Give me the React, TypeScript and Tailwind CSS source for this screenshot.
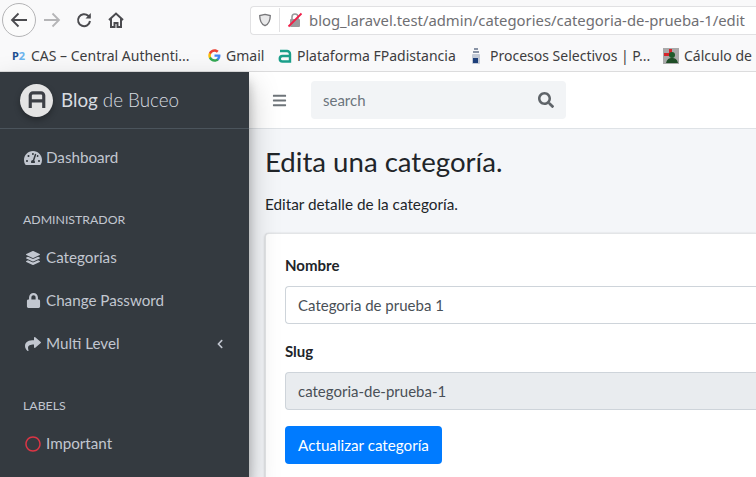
import { FaBars, FaChevronLeft, FaLayerGroup, FaLock, FaRegCircle, FaSearch, FaShare, FaTachometerAlt } from 'react-icons/fa';

const bookmarks = [
  { label: 'CAS – Central Authenti...', icon: <span className="w-[14px] text-[11px] font-bold leading-none"><span className="text-[#1d4f91]">P</span><span className="text-[#6cb4ee]">2</span></span>, width: 'w-[196px]' },
  {
    label: 'Gmail',
    width: 'w-[70px]',
    icon: (
      <svg viewBox="0 0 24 24" className="w-[13px] h-[13px]">
        <path fill="#4285F4" d="M23 12.300c0-.8-.1-1.600-.2-2.300H12v4.400h6.200c-.3 1.400-1.100 2.600-2.300 3.400v2.800h3.700c2.100-2 3.400-4.900 3.400-8.300z" />
        <path fill="#34A853" d="M12 23.500c3.100 0 5.700-1 7.600-2.800l-3.700-2.900c-1 .7-2.400 1.100-3.900 1.100-3 0-5.500-2-6.400-4.700H1.800v2.900c1.900 3.800 5.800 6.400 10.200 6.400z" />
        <path fill="#FBBC05" d="M5.600 14.200c-.5-1.400-.5-3 0-4.400V6.900H1.800c-1.600 3.200-1.600 7 0 10.200l3.800-2.900z" />
        <path fill="#EA4335" d="M12 5c1.700 0 3.200.6 4.400 1.700l3.300-3.300C17.700 1.600 15.100.5 12 .5 7.600.5 3.700 3.100 1.800 6.900l3.800 2.900C6.500 7 9 5 12 5z" />
      </svg>
    ),
  },
  {
    label: 'Plataforma FPadistancia',
    width: 'w-[192px]',
    icon: (
      <svg viewBox="0 0 14 14" className="w-[14px] h-[14px]" fill="none" stroke="#1a9f8a" strokeWidth="2.400">
        <path d="M2 2h7a3 3 0 0 1 3 3v7.500H4.500a2.500 2.500 0 0 1 0-5.500H12" />
      </svg>
    ),
  },
  {
    label: 'Procesos Selectivos | P...',
    width: 'w-[193px]',
    icon: (
      <svg viewBox="0 0 12 16" className="mr-[3px] w-[12px] h-[16px]">
        <rect x="4" y="0" width="4" height="2" fill="#8a94a6" />
        <rect x="3" y="3" width="6" height="2" fill="#8a94a6" />
        <rect x="2" y="6" width="8" height="10" rx="1" fill="#c3cad6" />
        <rect x="3" y="10" width="5" height="5" fill="#1d3f7a" />
      </svg>
    ),
  },
  {
    label: 'Cálculo de p',
    width: 'w-auto',
    icon: (
      <svg viewBox="0 0 16 16" className="w-[16px] h-[16px]">
        <rect width="16" height="16" fill="#a9a9a9" />
        <path d="M1 5h5V1h3v4h-2v3H1z" fill="#d8232a" />
        <circle cx="9" cy="7" r="3" fill="#1f5a2a" />
        <path d="M3 15c1-4 3-5 6-5s5 1 6 5z" fill="#1f4d26" />
      </svg>
    ),
  },
];

const navIconClass = 'w-[18px] flex justify-center text-[#c2c7d0] shrink-0';

function NavItem({ icon, label, trailing }: { icon: React.ReactNode; label: string; trailing?: boolean }) {
  return (
    <div className="h-[43px] flex items-center pl-[24px] pr-[24px] text-[#c2c7d0] text-[15.200px]">
      <span className={navIconClass}>{icon}</span>
      <span className="ml-[4px] flex-1">{label}</span>
      {trailing && <FaChevronLeft className="text-[10px]" />}
    </div>
  );
}

export default function App() {
  return (
    <div className="w-[756px] h-[477px] overflow-hidden bg-[#f9f9fa] flex flex-col font-['Noto_Sans',sans-serif]">
      {/* Browser toolbar */}
      <div className="h-[40px] flex items-center shrink-0 relative">
        <div className="ml-[2px] w-[34px] h-[34px] rounded-full border border-[#b4b4b6] bg-[#fbfbfb] flex items-center justify-center">
          <svg viewBox="0 0 18 18" className="w-[18px] h-[18px]" fill="none" stroke="#4b4b4f" strokeWidth="1.800">
            <path d="M17 9H2M8.500 2.500 2 9l6.500 6.500" />
          </svg>
        </div>
        <svg viewBox="0 0 18 18" className="ml-[7px] w-[18px] h-[18px]" fill="none" stroke="#b5b5b7" strokeWidth="1.800">
          <path d="M1 9h15M9.500 2.500 16 9l-6.500 6.500" />
        </svg>
        <svg viewBox="0 0 16 16" className="ml-[15px] w-[16px] h-[16px]" fill="none" stroke="#4b4b4f" strokeWidth="2">
          <path d="M14 9a6 6 0 1 1-1.800-5.200L14 5.500" />
          <path d="M14.800 1v5.500H9.500" fill="#4b4b4f" stroke="none" />
        </svg>
        <svg viewBox="0 0 16 16" className="ml-[16px] w-[16px] h-[16px]" fill="none" stroke="#4b4b4f" strokeWidth="2">
          <path d="M1 8 8 1.500 15 8M3 6.500V15h3.500v-4h3v4H13V6.500" />
        </svg>
        <div className="ml-[126px] flex-1 h-[29px] rounded-l-[4px] bg-white border border-[#e1e1e3] border-r-0 flex items-center text-[14.850px] text-[#6f6f73] whitespace-nowrap">
          <svg viewBox="0 0 16 16" className="ml-[7px] w-[14px] h-[14px]" fill="#e9e9ea" stroke="#77777a" strokeWidth="1.500">
            <path d="M8 1.500 14 3c0 6-1.500 9.500-6 11.500C3.500 12.500 2 9 2 3z" />
          </svg>
          <span className="ml-[7px] h-[24px] w-px bg-[#e1e1e3]" />
          <svg viewBox="0 0 16 16" className="ml-[7px] w-[16px] h-[16px]">
            <rect x="3" y="7" width="10" height="8" rx="1" fill="#9a9a9c" />
            <path d="M5 7V5a3 3 0 0 1 6 0v2" fill="none" stroke="#9a9a9c" strokeWidth="1.600" />
            <path d="M1.500 14.500 14.500 1.500" stroke="#f01f48" strokeWidth="1.800" />
          </svg>
          <span className="ml-[6px]">blog_laravel.test/admin/categories/categoria-de-prueba-1/edit</span>
        </div>
      </div>

      {/* Bookmarks */}
      <div className="h-[31px] shrink-0 flex items-center pl-[12px] text-[14px] text-[#3d3d40] whitespace-nowrap">
        {bookmarks.map((b) => (
          <div key={b.label} className={`${b.width} flex items-center gap-[5px] shrink-0`}>
            {b.icon}
            <span>{b.label}</span>
          </div>
        ))}
      </div>

      {/* Page */}
      <div className="flex-1 min-h-0 flex border-t border-[#dcdcdd] font-['Lato',sans-serif]">
        <aside className="w-[249px] shrink-0 bg-[#343a40] z-10 shadow-[0_14px_28px_rgba(0,0,0,0.25),0_10px_10px_rgba(0,0,0,0.22)]">
          <div className="h-[57px] border-b border-[#4b545c] flex items-center pl-[20px]">
            <div className="w-[33px] h-[33px] rounded-full bg-[#e4e4e4] shadow-[0_3px_6px_rgba(0,0,0,0.3)] flex items-center justify-center">
              <svg viewBox="0 0 20 20" className="w-[18px] h-[18px]" fill="none" stroke="#3d4046" strokeWidth="3.500">
                <path d="M2.500 19V5a3 3 0 0 1 3-3h9a3 3 0 0 1 3 3v14M2.500 11h15" />
              </svg>
            </div>
            <span className="ml-[8px] text-[18.800px] font-light text-[#d8dce0] whitespace-nowrap">
              <span className="font-normal">Blog</span> de Buceo
            </span>
          </div>
          <div className="pt-[7px]">
            <NavItem icon={<FaTachometerAlt className="text-[18px]" />} label="Dashboard" />
            <div className="pt-[32px] pb-[7px] pl-[23px] text-[12.300px] leading-[18px] text-[#c2c7d0]">ADMINISTRADOR</div>
            <NavItem icon={<FaLayerGroup className="text-[14px]" />} label="Categorías" />
            <NavItem icon={<FaLock className="text-[15px]" />} label="Change Password" />
            <NavItem icon={<FaShare className="text-[16px]" />} label="Multi Level" trailing />
            <div className="pt-[32px] pb-[7px] pl-[23px] text-[12.300px] leading-[18px] text-[#c2c7d0]">LABELS</div>
            <NavItem icon={<FaRegCircle className="text-[16px] text-[#dc3545]" />} label="Important" />
          </div>
        </aside>

        <main className="flex-1 min-w-0 bg-[#f4f6f9] flex flex-col">
          <div className="h-[57px] shrink-0 bg-white border-b border-[#dee2e6] flex items-center">
            <FaBars className="ml-[23px] text-[15px] text-[#6e7479]" />
            <div className="ml-[24px] w-[255px] h-[38px] rounded-[4px] bg-[#f2f4f6] flex items-center justify-between pl-[12px] pr-[12px]">
              <span className="text-[15px] text-[#6c757d]">search</span>
              <FaSearch className="text-[16px] text-[#5f6469]" />
            </div>
          </div>
          <div className="pl-[16px] flex-1 min-h-0">
            <h1 className="mt-[17px] text-[27.600px] leading-[31px] text-[#212529]">Edita una categoría.</h1>
            <p className="mt-[15px] text-[15.300px] leading-[24px] text-[#212529]">Editar detalle de la categoría.</p>
            <div className="mt-[17px] h-[300px] bg-white rounded-l-[4px] border-l border-t border-[#e3e5e7] pl-[19px] pt-[19px] shadow-[0_0_1px_rgba(0,0,0,0.125),0_1px_3px_rgba(0,0,0,0.2)]">
              <label className="block text-[15px] leading-[24px] font-bold text-[#212529]">Nombre</label>
              <div className="mt-[9px] h-[38px] rounded-l-[4px] border border-r-0 border-[#ced4da] bg-white flex items-center pl-[12px] text-[15px] text-[#495057]">
                Categoria de prueba 1
              </div>
              <label className="block mt-[15px] text-[15px] leading-[24px] font-bold text-[#212529]">Slug</label>
              <div className="mt-[9px] h-[38px] rounded-l-[4px] border border-r-0 border-[#ced4da] bg-[#e9ecef] flex items-center pl-[12px] text-[15px] text-[#495057]">
                categoria-de-prueba-1
              </div>
              <button className="mt-[16px] h-[38px] w-[157px] rounded-[4px] bg-[#007bff] text-white text-[15.200px]">Actualizar categoría</button>
            </div>
          </div>
        </main>
      </div>
    </div>
  );
}
